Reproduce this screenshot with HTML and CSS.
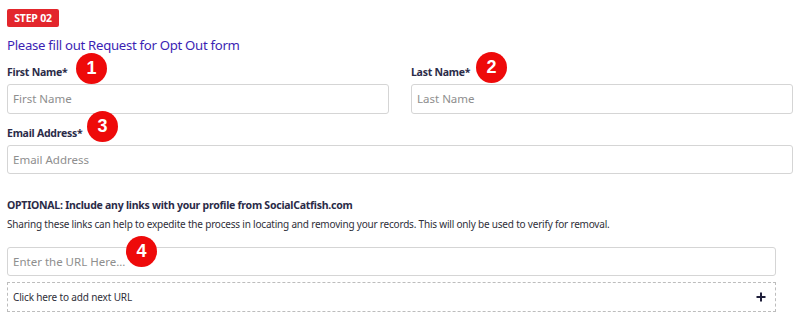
FILE: index.html
```html
<!DOCTYPE html>
<html>
<head>
<meta charset="utf-8">
<link rel="stylesheet" href="styles.css">
</head>
<body>
<div class="form">
  <div class="step">STEP 02</div>
  <h2 class="title">Please fill out Request for Opt Out form</h2>
  <div class="row two">
    <div class="field">
      <label class="label">First Name*<span class="marker m1">1</span></label>
      <div class="input">First Name</div>
    </div>
    <div class="field">
      <label class="label">Last Name*<span class="marker m2">2</span></label>
      <div class="input">Last Name</div>
    </div>
  </div>
  <div class="field email">
    <label class="label">Email Address*<span class="marker m3">3</span></label>
    <div class="input">Email Address</div>
  </div>
  <div class="optional">
    <div class="label">OPTIONAL: Include any links with your profile from SocialCatfish.com</div>
    <p class="note">Sharing these links can help to expedite the process in locating and removing your records. This will only be used to verify for removal.</p>
    <div class="urlwrap">
      <div class="input url">Enter the URL Here...<span class="marker m4">4</span></div>
      <div class="addurl">
        <span>Click here to add next URL</span>
        <svg class="plus" width="10" height="10" viewBox="0 0 10 10"><path d="M5 0.5V9.5M0.5 5H9.5" stroke="#1f1f3a" stroke-width="2"/></svg>
      </div>
    </div>
  </div>
</div>
</body>
</html>
```

FILE: styles.css
```css
* { box-sizing: border-box; }
body {
  margin: 0;
  background: #ffffff;
  font-family: "Noto Sans", "Open Sans", sans-serif;
}
.form {
  padding: 9px 7px 0 7px;
}
.step {
  display: block;
  width: 52px;
  height: 18px;
  line-height: 18px;
  text-align: center;
  background: #e3262c;
  color: #ffffff;
  font-size: 10.5px;
  font-weight: 700;
  letter-spacing: -0.2px;
  border-radius: 2px;
}
.title {
  margin: 8px 0 0 0;
  font-size: 13.2px;
  letter-spacing: -0.3px;
  line-height: 20px;
  font-weight: 400;
  color: #3c1fb4;
}
.row.two {
  display: grid;
  grid-template-columns: 1fr 1fr;
  column-gap: 22px;
  margin-top: 9px;
}
.field { display: flex; flex-direction: column; }
.label {
  position: relative;
  display: block;
  font-size: 10.5px;
  font-weight: 700;
  letter-spacing: -0.25px;
  color: #2b2b48;
  line-height: 16px;
  height: 16px;
}
.field .label { margin-bottom: 4px; }
.input {
  position: relative;
  height: 29px;
  border: 1px solid #d5d5d5;
  border-radius: 3px;
  padding: 0 5px;
  font-size: 11.5px;
  line-height: 27px;
  color: #8e8e8e;
}
.row.two .input { height: 30px; line-height: 28px; }
.email { margin-top: 11px; }
.optional { margin-top: 23px; }
.note {
  margin: 3px 0 0 0;
  font-size: 10px;
  letter-spacing: -0.2px;
  line-height: 16px;
  color: #2f2f3a;
}
.urlwrap { width: 769px; margin-top: 15px; }
.addurl {
  margin-top: 6px;
  height: 30px;
  border: 1px dashed #bdbdbd;
  display: flex;
  align-items: center;
  justify-content: space-between;
  padding: 0 9px 0 5px;
  font-size: 10px;
  letter-spacing: -0.15px;
  color: #2f2f3a;
}
.marker {
  position: absolute;
  width: 31px;
  height: 31px;
  border-radius: 50%;
  background: #ee0a0a;
  color: #ffffff;
  font-family: "Liberation Sans", Arial, sans-serif;
  font-weight: 700;
  font-size: 18px;
  letter-spacing: 0;
  line-height: 31px;
  text-align: center;
}
.m1 { left: 69px; top: -11px; }
.m2 { left: 65px; top: -12px; }
.m3 { left: 80px; top: -14px; }
.m4 { left: 118px; top: -12px; }
```
